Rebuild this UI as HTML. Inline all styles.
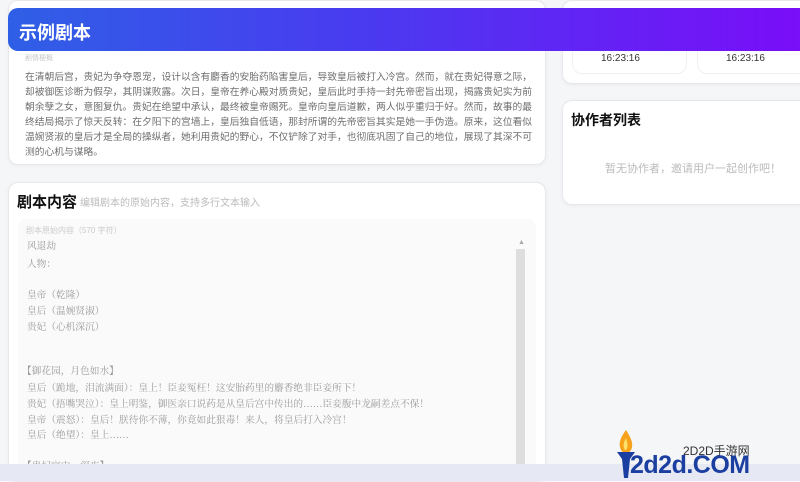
<!DOCTYPE html>
<html><head><meta charset="utf-8"><style>
*{margin:0;padding:0;box-sizing:border-box}
body{width:800px;height:481px;overflow:hidden;background:#f5f6f8;font-family:"Liberation Sans","Noto Sans CJK SC",sans-serif;position:relative}
.card{position:absolute;background:#fff;border:1px solid #e8e8ec;border-radius:10px;box-shadow:0 1px 4px rgba(0,0,0,.05)}
.abs{position:absolute;white-space:nowrap}
.syn{font-size:9.75px;color:#6f6f6f;left:25px}
.ta{font-family:"Liberation Serif","Noto Serif CJK SC",serif;font-size:9.7px;color:#9a9a9a;left:27px}
</style></head><body>
<div class="card" style="left:8px;top:0;width:538px;height:165px"></div>
<div class="abs" style="left:25px;top:53px;font-size:7px;color:#c8c8c8">剧情梗概</div>
<div class="abs syn" style="top:69px">在清朝后宫，贵妃为争夺恩宠，设计以含有麝香的安胎药陷害皇后，导致皇后被打入冷宫。然而，就在贵妃得意之际，</div>
<div class="abs syn" style="top:84px">却被御医诊断为假孕，其阴谋败露。次日，皇帝在养心殿对质贵妃，皇后此时手持一封先帝密旨出现，揭露贵妃实为前</div>
<div class="abs syn" style="top:99px">朝余孽之女，意图复仇。贵妃在绝望中承认，最终被皇帝赐死。皇帝向皇后道歉，两人似乎重归于好。然而，故事的最</div>
<div class="abs syn" style="top:114px">终结局揭示了惊天反转：在夕阳下的宫墙上，皇后独自低语，那封所谓的先帝密旨其实是她一手伪造。原来，这位看似</div>
<div class="abs syn" style="top:129px">温婉贤淑的皇后才是全局的操纵者，她利用贵妃的野心，不仅铲除了对手，也彻底巩固了自己的地位，展现了其深不可</div>
<div class="abs syn" style="top:144px">测的心机与谋略。</div>

<div class="card" style="left:562px;top:0;width:250px;height:84px"></div>
<div class="card" style="left:572px;top:30px;width:115px;height:44px;border-color:#f0f0f0;box-shadow:none"></div>
<div class="card" style="left:697px;top:30px;width:115px;height:44px;border-color:#f0f0f0;box-shadow:none"></div>
<div class="abs" style="left:601px;top:53px;font-size:10px;color:#333">16:23:16</div>
<div class="abs" style="left:726px;top:53px;font-size:10px;color:#333">16:23:16</div>

<div class="card" style="left:562px;top:100px;width:250px;height:105px"></div>
<div class="abs" style="left:571px;top:110px;font-size:14px;font-weight:bold;color:#111">协作者列表</div>
<div class="abs" style="left:605px;top:160px;font-size:11px;color:#bbb">暂无协作者，邀请用户一起创作吧！</div>

<div class="card" style="left:8px;top:182px;width:538px;height:300px"></div>
<div class="abs" style="left:17px;top:191px;font-size:15px;font-weight:bold;color:#111">剧本内容</div>
<div class="abs" style="left:80px;top:194px;font-size:10px;color:#bbb">编辑剧本的原始内容，支持多行文本输入</div>
<div style="position:absolute;left:18px;top:219px;width:518px;height:262px;background:#fafafa;border-radius:8px"></div>
<div class="abs" style="left:26px;top:225px;font-size:8px;color:#ccc">剧本原始内容（570 字符）</div>
<div style="position:absolute;left:516px;top:249px;width:9px;height:216px;background:#dedede"></div>
<div class="abs" style="left:518px;top:239px;font-size:7px;color:#aaa">▲</div>
<div class="abs ta" style="top:238px">风退劫</div>
<div class="abs ta" style="top:256px">人物：</div>
<div class="abs ta" style="top:287px">皇帝（乾隆）</div>
<div class="abs ta" style="top:303px">皇后（温婉贤淑）</div>
<div class="abs ta" style="top:319px">贵妃（心机深沉）</div>
<div class="abs ta" style="left:22px;top:363px">【御花园，月色如水】</div>
<div class="abs ta" style="top:380px">皇后（跪地，泪流满面）：皇上！臣妾冤枉！这安胎药里的麝香绝非臣妾所下！</div>
<div class="abs ta" style="top:396px">贵妃（捂嘴哭泣）：皇上明鉴，御医亲口说药是从皇后宫中传出的……臣妾腹中龙嗣差点不保！</div>
<div class="abs ta" style="top:412px">皇帝（震怒）：皇后！朕待你不薄，你竟如此狠毒！来人，将皇后打入冷宫！</div>
<div class="abs ta" style="top:427px">皇后（绝望）：皇上……</div>
<div class="abs ta" style="left:22px;top:458px">【贵妃宫中，深夜】</div>

<div style="position:absolute;left:0;top:464px;width:800px;height:17px;background:#e6e8f4"></div>

<div style="position:absolute;left:8px;top:8px;width:800px;height:43px;border-radius:10px 0 0 10px;background:linear-gradient(90deg,#2f5fe6 0%,#4a3af0 45%,#7a0df8 100%)"></div>
<div class="abs" style="left:19px;top:19px;font-size:18px;font-weight:bold;color:#fff">示例剧本</div>

<svg style="position:absolute;left:612px;top:428px" width="28" height="52" viewBox="0 0 28 52">
<path d="M14 2 C8 10 6 16 9 22 C11 26 17 26 19 22 C22 16 19 10 14 2Z" fill="#f7a21a"/>
<path d="M14 10 C11 15 11 19 13 22 C15 22 17 19 14 10Z" fill="#fde16a"/>
<path d="M5 24 L23 24 L18 31 L16 50 L12 50 L10 31Z" fill="#1b3fa0"/>
</svg>
<div class="abs" style="left:683px;top:442px;font-size:12px;color:#333">2D2D手游网</div>
<div class="abs" style="left:630px;top:451px;font-size:25px;font-weight:bold;color:#1b3fa0;letter-spacing:-0.5px">2d2d.COM</div>
</body></html>
